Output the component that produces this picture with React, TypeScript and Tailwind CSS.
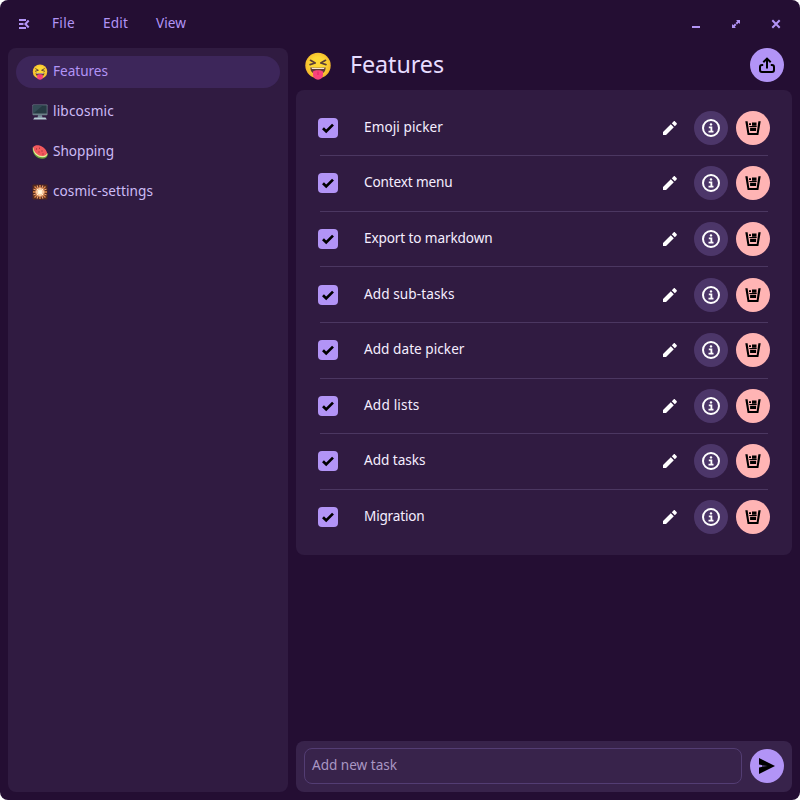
import { useLayoutEffect, useRef, useState } from "react";

type LabelProps = { text: string; width: number; className?: string };

/** Spreads a label evenly over the given width. */
function Label({ text, width, className = "" }: LabelProps) {
  const ref = useRef<HTMLSpanElement>(null);
  const [spacing, setSpacing] = useState(0);
  useLayoutEffect(() => {
    if (ref.current) {
      setSpacing((width - ref.current.getBoundingClientRect().width) / text.length);
    }
  }, []);
  return (
    <span ref={ref} className={"inline-block whitespace-pre " + className} style={{ letterSpacing: spacing }}>
      {text}
    </span>
  );
}

function TongueFace({ className }: { className: string }) {
  return (
    <svg viewBox="0 0 28 28" className={className}>
      <defs>
        <radialGradient id="face" cx="0.5" cy="0.45" r="0.55">
          <stop offset="0.5" stopColor="#fdd835" />
          <stop offset="1" stopColor="#f4b42b" />
        </radialGradient>
      </defs>
      <circle cx="14" cy="13.500" r="12.700" fill="url(#face)" />
      <path d="M6.500 8.300l4.700 2.700-5.200 1.600M21.500 8.300l-4.700 2.700 5.200 1.600" fill="none" stroke="#5d4037" strokeWidth="1.700" strokeLinecap="round" strokeLinejoin="round" />
      <path d="M6.500 15.300c2 .6 13 .6 15 0 .6 4.200-2.800 7.200-7.500 7.200s-8.100-3-7.500-7.200z" fill="#5f3a35" />
      <path d="M7.500 15.600c2.500.6 10.500.6 13 0l-.4 1.500H7.900z" fill="#f5e6d0" />
      <path d="M9 19.500c2-1.800 8-1.800 10 0v3.300c0 2.900-2.200 4.900-5 4.900s-5-2-5-4.900z" fill="#f8437c" />
      <path d="M14 19.500v3.500" stroke="#e02563" strokeWidth="1" />
    </svg>
  );
}

function Desktop({ className }: { className: string }) {
  return (
    <svg viewBox="0 0 16 16" className={className}>
      <rect x="0.500" y="0.500" width="15" height="10.800" rx="0.700" fill="#6c7f88" />
      <rect x="1.300" y="1.300" width="13.400" height="8.200" fill="#263a43" />
      <path d="M1.300 9.500L11 1.300H1.300z" fill="#344c56" />
      <path d="M6 11.300h4l.5 2.500h-5z" fill="#78909c" />
      <path d="M2.500 13.600h11l1.300 2H1.200z" fill="#b5cbd5" />
    </svg>
  );
}

function Watermelon({ className }: { className: string }) {
  return (
    <svg viewBox="0 0 16 16" className={className}>
      <path d="M.6 3.500C0 10 5 15.500 11 14.800c3.500-.4 5.300-2.800 4.700-5.500z" fill="#689f38" />
      <path d="M.9 3.300C.8 9.500 5.500 13.700 11 13.200c2.700-.2 4.300-1.500 4.500-3.500z" fill="#e6ee9c" />
      <path d="M1.200 3C2.500 1.300 5 .8 7.500 1.500c4 1 7 4.300 7.700 7.800-1 2-2.500 2.600-4.200 2.700C6 12.200 1.800 8.700 1.200 3z" fill="#f4595d" />
      <path d="M4.500 4.500v1M7.500 3.700v1M7 7.500v1M10 6.500v1M11 9.500v1" stroke="#7a2630" strokeWidth="0.900" />
    </svg>
  );
}

function Sparkler({ className }: { className: string }) {
  return (
    <svg viewBox="0 0 16 16" className={className}>
      <rect x="0.500" y="0.500" width="15" height="15" rx="1" fill="#52291f" />
      <path d="M8 1v14M1 8h14M2.500 2.500l11 11M13.500 2.500l-11 11" stroke="#e58a48" strokeWidth="1.400" />
      <path d="M5 1.500l6 13M11 1.500l-6 13M1.500 5l13 6M1.500 11l13-6" stroke="#f0a070" strokeWidth="1.200" />
      <circle cx="8" cy="8" r="4" fill="#ffb98a" opacity="0.700" />
      <path d="M8 3.500v9M3.500 8h9M5 5l6 6M11 5l-6 6" stroke="#fff0d0" strokeWidth="1.100" />
      <circle cx="8" cy="8" r="1.800" fill="#fff6df" />
    </svg>
  );
}

function PanelToggle() {
  return (
    <svg viewBox="0 0 16 16" className="size-4" fill="none" stroke="#b294f6" strokeWidth="2">
      <path d="M3 4h7M3 8h4.500M3 12h7" />
      <path d="M12.700 4.500L9.400 8l3.300 3.500" />
    </svg>
  );
}

function Pencil() {
  return (
    <svg viewBox="0 0 16 16" className="size-4" fill="#fff">
      <path d="M1 12v3h3l7.800-7.800-3-3zM9.800 3.200l3 3 1.800-1.800c.4-.4.4-1 0-1.400l-1.600-1.600c-.4-.4-1-.4-1.400 0z" />
    </svg>
  );
}

function Info() {
  return (
    <svg viewBox="0 0 18 18" className="size-[18px]" fill="none" stroke="#fff">
      <circle cx="9" cy="9" r="8" strokeWidth="2" />
      <circle cx="9" cy="5.400" r="1.200" fill="#fff" stroke="none" />
      <path d="M6.800 8.300h2.600v4.200M6.500 12.600h5" strokeWidth="1.800" />
    </svg>
  );
}

function Bin() {
  return (
    <svg viewBox="0 0 16 16" className="size-4">
      <path d="M.3 1.300h2.300l1.700 11.700h7.400l1.700-11.700h2.300L13.400 15H2.600z" />
      <path d="M4 3.300h2v1.700H4zM7 2.500h4.500v3.300H7zM4.300 6h7.400v.9H4.300zM5.100 7.800h6v3.200h-6z" />
    </svg>
  );
}

function Share() {
  return (
    <svg viewBox="0 0 16 16" className="size-4" fill="none" stroke="#000" strokeWidth="2">
      <path d="M8 11.500V1.800M4.300 5.300L8 1.600l3.700 3.700" />
      <path d="M4.200 8H3a2 2 0 0 0-2 2v3a2 2 0 0 0 2 2h10a2 2 0 0 0 2-2v-3a2 2 0 0 0-2-2h-1.200" />
    </svg>
  );
}

function Send() {
  return (
    <svg viewBox="0 0 16 16" className="-ml-px size-4">
      <path d="M0 0l16 8-16 8V9.500L8.500 8 0 6.500z" />
      <path d="M3 7h5.500v2H3z" fill="#000" opacity="0.550" />
    </svg>
  );
}

const lists = [
  { name: "Features", width: 55, Icon: TongueFace },
  { name: "libcosmic", width: 61, Icon: Desktop },
  { name: "Shopping", width: 61, Icon: Watermelon },
  { name: "cosmic-settings", width: 100, Icon: Sparkler },
];

const tasks = [
  { name: "Emoji picker", width: 79 },
  { name: "Context menu", width: 88.5 },
  { name: "Export to markdown", width: 128.5 },
  { name: "Add sub-tasks", width: 90.5 },
  { name: "Add date picker", width: 100.5 },
  { name: "Add lists", width: 55.5 },
  { name: "Add tasks", width: 61.5 },
  { name: "Migration", width: 60.5 },
];

export default function App() {
  return (
    <div className="h-[800px] w-[800px] bg-white">
      <div className="flex h-full flex-col overflow-hidden rounded-lg bg-[#240e33] font-['Noto_Sans','Open_Sans',sans-serif] text-[13.600px] leading-5">
        <header className="flex h-12 shrink-0 items-center pl-4 pr-4 text-[#b294f6]">
          <PanelToggle />
          <nav className="flex flex-1 pb-0.5 pl-5">
            <div className="w-[51px]"><Label text="File" width={23} /></div>
            <div className="w-[53px]"><Label text="Edit" width={25} /></div>
            <Label text="View" width={30} />
          </nav>
          <div className="flex gap-6">
            <svg viewBox="0 0 16 16" className="size-4" fill="#b294f6"><path d="M4 10h8v2H4z" /></svg>
            <svg viewBox="0 0 16 16" className="size-4" fill="#b294f6">
              <path d="M8 4h4v4l-1.300-1.300L9 8.400 7.600 7l1.700-1.700zM8 12H4V8l1.300 1.300L7 7.600 8.400 9l-1.700 1.700z" />
            </svg>
            <svg viewBox="0 0 16 16" className="size-4" fill="none" stroke="#b294f6" strokeWidth="2"><path d="M4.300 4.300l7.400 7.400M11.700 4.300l-7.400 7.400" /></svg>
          </div>
        </header>
        <div className="flex min-h-0 flex-1 gap-2 px-2 pb-2">
          <aside className="flex w-[280px] flex-col gap-2 rounded-lg bg-[#301b41] p-2">
            {lists.map(({ name, width, Icon }, i) => (
              <div
                key={name}
                className={
                  "flex h-8 items-center rounded-full pl-4 " +
                  (i === 0 ? "bg-[#3d265a] text-[#b294f6]" : "text-[#cdbcf6]")
                }
              >
                <Icon className="size-4" />
                <Label text={name} width={width} className="-mt-0.5 ml-[5px]" />
              </div>
            ))}
          </aside>
          <main className="flex flex-1 flex-col">
            <div className="flex h-[42px] shrink-0 items-center pb-2 pl-2 pr-2">
              <TongueFace className="mt-0.5 size-7" />
              <h1 className="flex-1 pb-0.5 pl-[18px] text-[23.300px] leading-8 text-[#e7dcff]">
                <Label text="Features" width={94} />
              </h1>
              <button className="flex size-[34px] items-center justify-center rounded-full bg-[#b294f6]"><Share /></button>
            </div>
            <section className="h-[464.500px] shrink-0 rounded-lg bg-[#301b41] px-6 pt-[10.600px]">
              {tasks.map(({ name, width }, i) => (
                <div
                  key={name}
                  className={"flex h-[55.600px] items-center " + (i < tasks.length - 1 ? "border-b border-[#4b3761]" : "border-b border-transparent")}
                >
                  <div className="-ml-0.5 flex size-5 shrink-0 items-center justify-center rounded bg-[#b294f6]">
                    <svg viewBox="0 0 12 12" className="size-3" fill="none" stroke="#000" strokeWidth="2.700"><path d="M1 6.200l3.200 3.200L11 2.600" /></svg>
                  </div>
                  <div className="flex-1 pb-0.5 pl-[26px] text-[#f5eeff]"><Label text={name} width={width} /></div>
                  <Pencil />
                  <div className="ml-4 flex size-[34px] items-center justify-center rounded-full bg-[#4c3669]"><Info /></div>
                  <div className="-mr-0.5 ml-2 flex size-[34px] items-center justify-center rounded-full bg-[#ffb4b4]"><Bin /></div>
                </div>
              ))}
            </section>
            <div className="flex-1" />
            <footer className="flex h-[51.500px] shrink-0 items-center gap-2 rounded-lg bg-[#38234b] px-2">
              <div className="flex h-9 flex-1 items-center rounded-lg border border-[#533d73] pb-0.5 pl-[7px] text-[#a996c3]">
                <Label text="Add new task" width={85} />
              </div>
              <button className="flex size-[34px] items-center justify-center rounded-full bg-[#b294f6]"><Send /></button>
            </footer>
          </main>
        </div>
      </div>
    </div>
  );
}
